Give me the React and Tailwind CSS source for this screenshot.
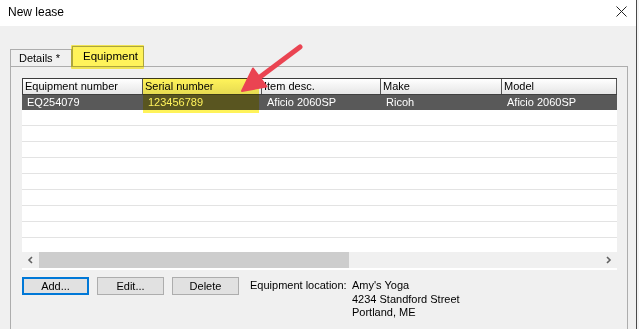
import React from 'react';

const columns = [
  { title: 'Equipment number', width: 'w-[121px]', value: 'EQ254079' },
  { title: 'Serial number', width: 'w-[119px]', value: '123456789' },
  { title: 'Item desc.', width: 'w-[119px]', value: 'Aficio 2060SP' },
  { title: 'Make', width: 'w-[121px]', value: 'Ricoh' },
  { title: 'Model', width: 'w-[115px]', value: 'Aficio 2060SP' },
];

const Button = ({ label, focused }) => (
  <button
    className={`h-[18px] w-[67px] bg-[#e1e1e1] text-[11px] leading-none text-black ${
      focused ? 'border-2 border-[#0078d7]' : 'border border-[#adadad]'
    }`}
  >
    {label}
  </button>
);

const App = () => {
  return (
    <div className="relative flex h-[329px] w-[639px] overflow-hidden bg-[#f0f0f0] font-['Liberation_Sans',Arial,sans-serif] text-black">
      <div className="flex w-[636px] flex-col">
        {/* Title bar */}
        <div className="flex h-[26px] items-center justify-between bg-white pl-[8px] pr-[9px]">
          <span className="mt-[-2px] text-[12px]">New lease</span>
          <svg width="11" height="11" viewBox="0 0 11 11" className="mt-[-4px]">
            <path d="M0.5 0.5L10.5 10.5M10.5 0.5L0.5 10.5" stroke="#222" strokeWidth="1" />
          </svg>
        </div>

        <div className="flex flex-1 flex-col pl-[10px] pr-[8px] pt-[20px]">
          {/* Tabs */}
          <div className="flex h-[20px] items-end">
            <div className="flex h-[17px] w-[62px] items-center border border-b-0 border-[#adadad] bg-[#f0f0f0] pl-[8px] text-[11px]">
              Details *
            </div>
            <div className="relative flex h-[20px] w-[72px] items-center border border-b-0 border-[#adadad] bg-white pl-[10px] text-[11.5px]">
              Equipment
            </div>
          </div>

          {/* Tab panel */}
          <div className="flex flex-1 flex-col border border-b-0 border-[#adadad] pl-[11px] pt-[11px]">
            {/* Grid */}
            <div className="flex h-[192px] w-[595px] flex-col border-b-2 border-white bg-white">
              <div className="flex h-[17px] border-t border-[#3c3c3c] border-b border-b-[#404040] bg-gradient-to-b from-white to-[#e6e6e6]">
                {columns.map((c, i) => (
                  <div
                    key={c.title}
                    className={`${c.width} flex items-center border-r border-[#555] pl-[2px] text-[11px] ${
                      i === 0 ? 'border-l border-l-[#3c3c3c]' : ''
                    }`}
                  >
                    {c.title}
                  </div>
                ))}
              </div>
              <div className="flex h-[15px] bg-[#595959] text-white">
                {columns.map((c) => (
                  <div key={c.title} className={`${c.width} flex items-center pl-[5px] text-[11px]`}>
                    {c.value}
                  </div>
                ))}
              </div>
              {Array.from({ length: 8 }).map((_, i) => (
                <div key={i} className="h-[16px] border-b border-[#e3e3e3]" />
              ))}
              <div className="flex-1" />
              {/* Horizontal scrollbar */}
              <div className="flex h-[16px] bg-[#f0f0f0]">
                <div className="flex w-[17px] items-center justify-center">
                  <svg width="7" height="8" viewBox="0 0 7 8">
                    <path d="M5 1L2 4L5 7" fill="none" stroke="#606060" strokeWidth="1.6" />
                  </svg>
                </div>
                <div className="w-[310px] bg-[#cdcdcd]" />
                <div className="flex-1" />
                <div className="flex w-[17px] items-center justify-center">
                  <svg width="7" height="8" viewBox="0 0 7 8">
                    <path d="M2 1L5 4L2 7" fill="none" stroke="#606060" strokeWidth="1.6" />
                  </svg>
                </div>
              </div>
            </div>

            {/* Buttons and location */}
            <div className="mt-[7px] flex items-start gap-[8px]">
              <Button label="Add..." focused />
              <Button label="Edit..." />
              <Button label="Delete" />
              <div className="ml-[3px] flex pt-[2px] text-[11px] leading-[13.5px]">
                <span className="w-[102px]">Equipment location:</span>
                <div className="flex flex-col">
                  <span>Amy's Yoga</span>
                  <span>4234 Standford Street</span>
                  <span>Portland, ME</span>
                </div>
              </div>
            </div>
          </div>
        </div>
      </div>

      {/* Window edge */}
      <div className="w-[1px] bg-[#4a4a4a]" />
      <div className="w-[2px] bg-[#f4f4f4]" />

      {/* Highlighter marks */}
      <div className="pointer-events-none absolute left-[71px] top-[45px] h-[24px] w-[73px] rounded-[1px] bg-[#fff35a] mix-blend-multiply" />
      <div className="pointer-events-none absolute left-[143px] top-[78px] h-[35px] w-[116px] bg-[#fff35a] mix-blend-multiply" />

      {/* Red arrow */}
      <svg className="pointer-events-none absolute left-0 top-0" width="639" height="329">
        <line x1="300" y1="47" x2="256" y2="80" stroke="#ea4452" strokeWidth="5" strokeLinecap="round" />
        <polygon points="242,91 253,68.5 266.5,86.5" fill="#ea4452" stroke="#ea4452" strokeWidth="2" strokeLinejoin="round" />
      </svg>
    </div>
  );
};

export default App;
